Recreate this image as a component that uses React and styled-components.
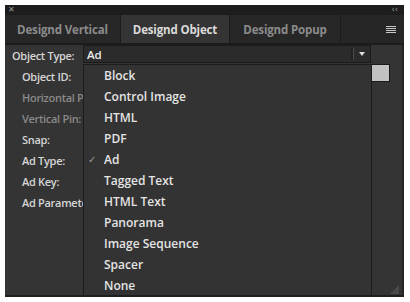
import React from "react";
import styled, { createGlobalStyle } from "styled-components";

const Global = createGlobalStyle`
  body {
    margin: 0;
    background: #ffffff;
    font-family: "Open Sans", "Noto Sans", sans-serif;
  }
  #root {
    padding: 5px 6px 5px 5px;
  }
`;

const Panel = styled.div`
  width: 399px;
  height: 292px;
  background: #343434;
  display: flex;
  flex-direction: column;
  border-bottom: 2px solid #1f1f1f;
  box-sizing: border-box;
  overflow: hidden;
`;

const TitleBar = styled.div`
  height: 10px;
  background: #1d1d1d;
  display: flex;
  align-items: center;
  justify-content: space-between;
  padding: 0 6px 0 3px;
  color: #9a9a9a;
  font-family: "DejaVu Sans", sans-serif;
  font-size: 8px;
  line-height: 10px;
`;

const TabBar = styled.div`
  height: 28px;
  background: #262626;
  display: flex;
  border-bottom: 2px solid #1c1c1c;
`;

const Tab = styled.div`
  width: ${(p) => p.w}px;
  display: flex;
  align-items: center;
  justify-content: center;
  font-size: 11.5px;
  font-weight: 700;
  letter-spacing: -0.15px;
  color: ${(p) => (p.active ? "#dadada" : "#8b8b8b")};
  background: ${(p) => (p.active ? "#343434" : "#272727")};
  border-right: 1px solid #1b1b1b;
  white-space: nowrap;
`;

const MenuIcon = styled.div`
  margin-left: auto;
  width: 10px;
  padding-right: 8px;
  display: flex;
  flex-direction: column;
  justify-content: center;
  gap: 1px;
  span {
    height: 1px;
    background: #c8c8c8;
  }
`;

const Body = styled.div`
  position: relative;
  flex: 1;
  display: flex;
  border-right: 2px solid #242424;
`;

const Form = styled.div`
  flex: 1;
  display: flex;
  flex-direction: column;
  padding-left: 7px;
`;

const Row = styled.div`
  height: 21px;
  display: flex;
  align-items: center;
  padding-left: ${(p) => (p.indent ? 10 : 0)}px;
  font-size: 11px;
  font-weight: 600;
  letter-spacing: -0.3px;
  color: ${(p) => (p.dim ? "#8a8a8a" : "#d6d6d6")};
  white-space: nowrap;
`;

const Select = styled.div`
  position: absolute;
  left: 78px;
  top: 0;
  width: 288px;
  height: 18px;
  box-sizing: border-box;
  background: #2b2b2b;
  border: 1px solid #1c1c1c;
  display: flex;
  align-items: center;
  padding-left: 3px;
  font-size: 11.5px;
  font-weight: 600;
  color: #ececec;
`;

const SelectArrow = styled.div`
  margin-left: auto;
  width: 16px;
  height: 12px;
  border-left: 1px solid #4a4a4a;
  box-shadow: -2px 0 0 #222;
  display: flex;
  align-items: center;
  justify-content: center;
  &::after {
    content: "";
    border-left: 3px solid transparent;
    border-right: 3px solid transparent;
    border-top: 4px solid #dcdcdc;
  }
`;

const Swatch = styled.div`
  position: absolute;
  left: 360px;
  top: 19px;
  width: 25px;
  height: 18px;
  box-sizing: border-box;
  background: #c2c2c2;
  border: 1px solid #1a1a1a;
`;

const Menu = styled.div`
  position: absolute;
  left: 78px;
  top: 19px;
  width: 289px;
  box-sizing: border-box;
  background: #333333;
  border: 1px solid #1c1c1c;
  border-bottom: none;
  z-index: 2;
`;

const Item = styled.div`
  position: relative;
  height: 21px;
  display: flex;
  align-items: center;
  padding-left: 20px;
  font-size: 12px;
  font-weight: 600;
  color: #e4e4e4;
`;

const Check = styled.span`
  position: absolute;
  left: 4px;
  top: 5px;
  color: #9c9c9c;
  font-family: "DejaVu Sans", sans-serif;
  font-size: 10px;
`;

const Grip = styled.svg`
  position: absolute;
  right: 3px;
  bottom: 1px;
`;

const items = [
  "Block",
  "Control Image",
  "HTML",
  "PDF",
  "Ad",
  "Tagged Text",
  "HTML Text",
  "Panorama",
  "Image Sequence",
  "Spacer",
  "None",
];

const labels = [
  { t: "Object ID:" },
  { t: "Horizontal Pin:", dim: true },
  { t: "Vertical Pin:", dim: true },
  { t: "Snap:" },
  { t: "Ad Type:" },
  { t: "Ad Key:" },
  { t: "Ad Parameters:" },
];

const gripDots = [
  [7, 1],
  [5, 3],
  [7, 3],
  [3, 5],
  [5, 5],
  [7, 5],
  [1, 7],
  [3, 7],
  [5, 7],
  [7, 7],
];

export default function App() {
  return (
    <>
      <Global />
      <Panel>
        <TitleBar>
          <span>✕</span>
          <span>‹‹</span>
        </TitleBar>
        <TabBar>
          <Tab w={115}>Designd Vertical</Tab>
          <Tab w={108} active>
            Designd Object
          </Tab>
          <Tab w={110}>Designd Popup</Tab>
          <MenuIcon>
            <span />
            <span />
            <span />
            <span />
          </MenuIcon>
        </TabBar>
        <Body>
          <Form>
            <Row>Object Type:</Row>
            {labels.map((l) => (
              <Row indent dim={l.dim} key={l.t}>
                {l.t}
              </Row>
            ))}
          </Form>
          <Select>
            Ad
            <SelectArrow />
          </Select>
          <Swatch />
          <Menu>
            {items.map((it) => (
              <Item key={it}>
                {it === "Ad" && <Check>✓</Check>}
                {it}
              </Item>
            ))}
          </Menu>
          <Grip width="8" height="8" viewBox="0 0 8 8">
            {gripDots.map(([x, y], i) => (
              <rect key={i} x={x - 0.5} y={y - 0.5} width="1" height="1" fill="#8a8a8a" />
            ))}
          </Grip>
        </Body>
      </Panel>
    </>
  );
}
